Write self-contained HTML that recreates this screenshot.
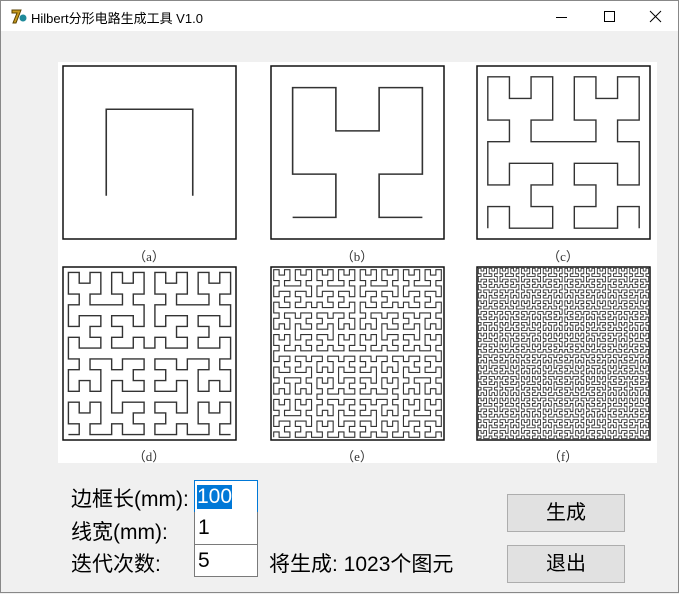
<!DOCTYPE html>
<html><head><meta charset="utf-8"><style>
body{margin:0;width:679px;height:593px;overflow:hidden;background:#f0f0f0;font-family:"Liberation Sans","Noto Sans CJK SC",sans-serif;position:relative}
.win{position:absolute;left:0;top:0;width:677px;height:591px;border:1px solid #888;background:#f0f0f0}
.title{position:absolute;left:0;top:0;width:677px;height:30px;background:#fff}
.title .t{position:absolute;left:30px;top:7px;font-size:13px;color:#000}
.lbl{position:absolute;font-size:21px;color:#000;white-space:nowrap;font-family:"Liberation Sans","Noto Sans CJK SC",sans-serif}
.inp{position:absolute;left:193px;width:64px;height:33px;background:#fff;border:1px solid #7a7a7a;font-size:21px;box-sizing:border-box}
.btn{position:absolute;left:506px;width:118px;height:38px;background:#e1e1e1;border:1px solid #adadad;box-sizing:border-box;font-size:20px;text-align:center;line-height:36px}
.cap{position:absolute;font-size:13px;color:#333;width:60px;text-align:center;font-family:"Liberation Serif","Noto Sans CJK SC",serif}
</style></head><body>
<div class="win">
<div class="title">
<svg style="position:absolute;left:9px;top:6px" width="18" height="18"><path d="M2 3h9l-5 13h-3l4-10h-5z" fill="#c79a1e" stroke="#5a4200" stroke-width="1"/><circle cx="13" cy="11" r="3.5" fill="#1e8a9a"/></svg>
<span class="t">Hilbert分形电路生成工具 V1.0</span>
<svg style="position:absolute;left:555px;top:9px" width="110" height="14"><path d="M0 7.5h11" stroke="#000"/><rect x="48.5" y="1.5" width="10" height="10" fill="none" stroke="#000"/><path d="M94 1l11 11M105 1l-11 11" stroke="#000"/></svg>
</div>
<div style="position:absolute;left:57px;top:61px;width:599px;height:401px;background:#fff"></div>
<svg id="s" style="position:absolute;left:0;top:0" width="679" height="593"></svg>
<div class="cap" style="left:118px;top:245px">（a）</div>
<div class="cap" style="left:326px;top:245px">（b）</div>
<div class="cap" style="left:532px;top:245px">（c）</div>
<div class="cap" style="left:118px;top:445px">（d）</div>
<div class="cap" style="left:326px;top:445px">（e）</div>
<div class="cap" style="left:532px;top:445px">（f）</div>
<div class="lbl" style="left:70px;top:482px">边框长(mm):</div>
<div class="lbl" style="left:70px;top:515px">线宽(mm):</div>
<div class="lbl" style="left:70px;top:547px">迭代次数:</div>
<div class="inp" style="top:479px;border-color:#0078d7"><span style="position:absolute;left:2px;top:4px;background:#0078d7;color:#fff;line-height:24px">100</span></div>
<div class="inp" style="top:511px;border-top:none"><span style="position:absolute;left:3px;top:4px">1</span></div>
<div class="inp" style="top:543px"><span style="position:absolute;left:3px;top:4px">5</span></div>
<div class="lbl" style="left:268px;top:547px">将生成: 1023个图元</div>
<div class="btn" style="top:493px">生成</div>
<div class="btn" style="top:544px">退出</div>
</div>
<script>
function d2xy(n,d){var x=0,y=0,t=d;for(var s=1;s<n;s*=2){var rx=1&(t/2),ry=1&(t^rx);if(ry==0){if(rx==1){x=s-1-x;y=s-1-y;}var tmp=x;x=y;y=tmp;}x+=s*rx;y+=s*ry;t=Math.floor(t/4);}return[x,y];}
var boxes=[[62,65],[270,65],[476,65],[62,266],[270,266],[476,266]];
var S=173,h='';
boxes.forEach(function(b,i){var ord=i+1,n=1<<ord,c=S/n,pts=[];
for(var d=0;d<n*n;d++){var p=d2xy(n,d);pts.push((b[0]+(p[0]+0.5)*c).toFixed(2)+','+(b[1]+(n-1-p[1]+0.5)*c).toFixed(2));}
var w=ord<=2?1.6:(ord<=4?1.4:(ord==5?1.1:0.9));
h+='<rect x="'+b[0]+'" y="'+b[1]+'" width="'+S+'" height="'+S+'" fill="none" stroke="#111" stroke-width="1.5"/>';
h+='<polyline points="'+pts.join(' ')+'" fill="none" stroke="#333" stroke-width="'+w+'"/>';});
document.getElementById('s').innerHTML=h;
</script>
</body></html>
